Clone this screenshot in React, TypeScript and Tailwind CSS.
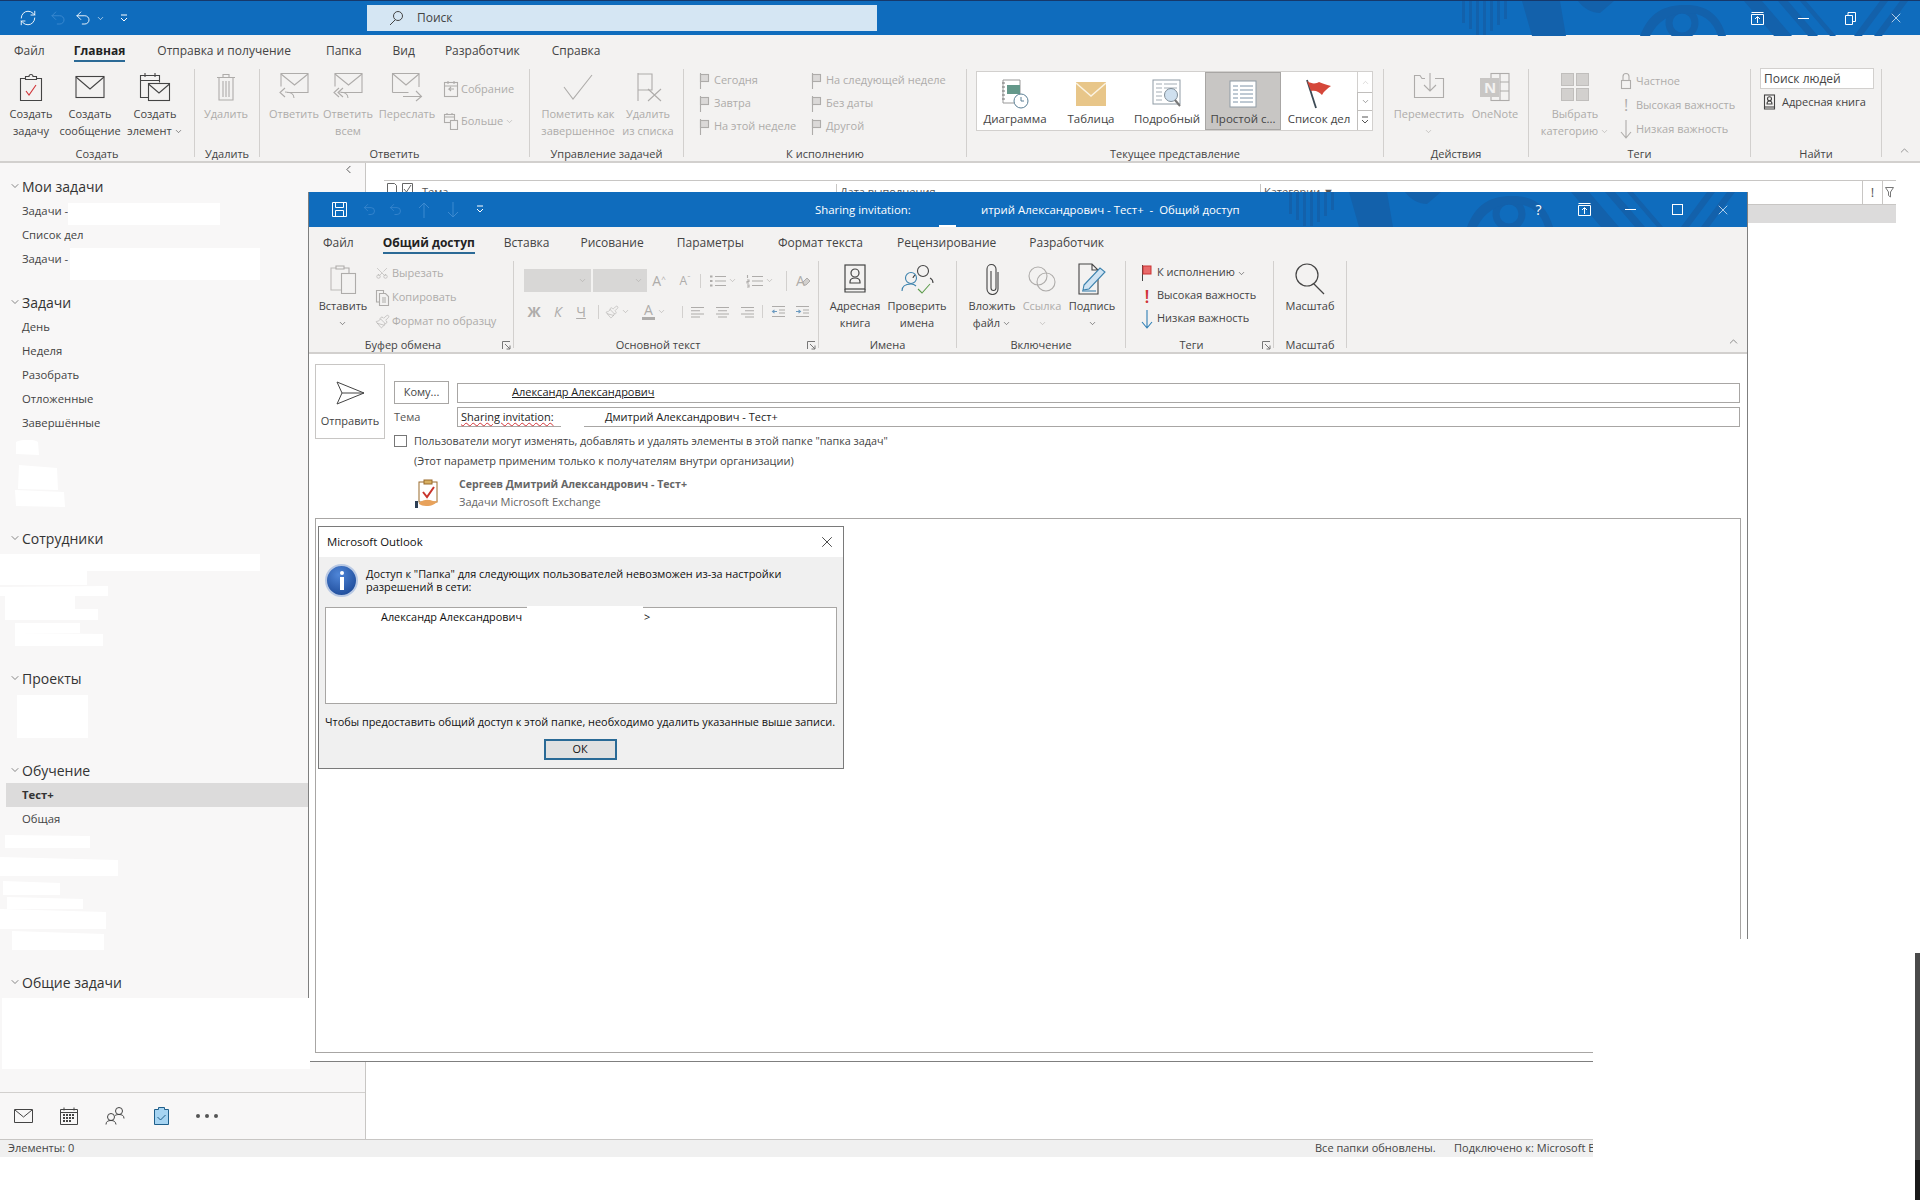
import type { ReactNode } from "react";
import { ChevronDown, ChevronUp, ChevronLeft, Paintbrush, RefreshCw, Scissors, Undo2, Redo2, X } from "lucide-react";

const Svg = ({ w, h, sw = 1.1, children }: { w: number; h: number; sw?: number; children: ReactNode }) => (
  <svg width={w} height={h} viewBox={`0 0 ${w} ${h}`} fill="none" stroke="currentColor" strokeWidth={sw}>
    {children}
  </svg>
);

// small chevron used in ribbon buttons
const Chev = () => <ChevronDown size={9} strokeWidth={1.6} className="inline-block" />;

// ---- ribbon icons
const TaskIcon = () => (
  <Svg w={24} h={28}>
    <path d="M6.500 5.500h-5v22h21v-22h-5" />
    <path d="M6.500 6.500V3.500h3.500a2 2 0 0 1 4 0h3.500v3z" />
    <path d="M7 18l3 4 7-10" stroke="#d13438" />
  </Svg>
);
const MailIcon = () => (
  <Svg w={30} h={24}>
    <rect x="1" y="1.500" width="28" height="21" />
    <path d="M1 2l14 12L29 2" />
  </Svg>
);
const ItemIcon = () => (
  <Svg w={32} h={30}>
    <path d="M11 25.500H1.500V3.500h19v7" />
    <path d="M1.500 8.500h19M6 1v4M16 1v4" />
    <rect x="9.500" y="11.500" width="21" height="17" fill="#f3f2f1" />
    <path d="M9.500 12l10.500 9 10.500-9" />
  </Svg>
);
const TrashIcon = () => (
  <Svg w={20} h={28}>
    <path d="M1 4.500h18M7 4V1.500h6V4M3 5v22h14V5M7 8v16M10 8v16M13 8v16" />
  </Svg>
);
const MailBack = ({ all }: { all?: boolean }) => (
  <Svg w={32} h={30}>
    <path d="M9 20.500h21V1.500H3v13" />
    <path d="M3 2l13.500 11L30 2" />
    <path d="M16 26c0-4-4-6-9-6M7 16l-5 4.500L7 25" />
    {all && <path d="M11 16l-5 4.500 5 4.500" />}
  </Svg>
);
const MailForward = () => (
  <Svg w={32} h={30}>
    <path d="M1.500 20.500h16M28 15V1.500H1.500v19" />
    <path d="M2 2l13 11L28 2" />
    <path d="M12 24.500h18M25 19l5.500 5.500L25 29" />
  </Svg>
);
const MeetingIcon = () => (
  <Svg w={16} h={18}>
    <rect x="1.500" y="2.500" width="13" height="14" />
    <path d="M1.500 6h13M5 1v3M11 1v3M11 9H6l2-2M6 9l2 2" />
  </Svg>
);
const MoreIcon = () => (
  <Svg w={16} h={18}>
    <rect x="1.500" y="2.500" width="10" height="8" />
    <path d="M4 1v2M9 1v2M1.500 5h10" />
    <rect x="7.500" y="8.500" width="7" height="9" fill="#f3f2f1" />
  </Svg>
);
const CheckBig = () => (
  <Svg w={32} h={28}>
    <path d="M2 14l9 12L30 2" />
  </Svg>
);
const FlagX = () => (
  <Svg w={30} h={30}>
    <path d="M5 1v28M5 2h14v16H5" />
    <path d="M15 17l13 12M28 17L15 29" />
  </Svg>
);
const FlagSmall = () => (
  <Svg w={11} h={18}>
    <path d="M1.500 1v16" />
    <rect x="1.500" y="2.500" width="8" height="7" fill="currentColor" fillOpacity="0.35" />
  </Svg>
);
const MoveIcon = () => (
  <Svg w={32} h={30}>
    <path d="M12 6.500H9l-2-3H1.500v22h29v-19H22" />
    <path d="M17 1v18M11 13l6 6 6-6" />
  </Svg>
);
const OneNoteIcon = () => (
  <Svg w={32} h={30}>
    <rect x="12" y="1.500" width="18" height="27" />
    <path d="M21 1.500v27M21 10h9M21 19h9" />
    <rect x="1" y="6" width="19" height="19" fill="#c8c6c4" stroke="none" />
    <text x="5" y="21" fontSize="15" fontWeight="700" fill="#f3f2f1" stroke="none">N</text>
  </Svg>
);
const CategoryIcon = () => (
  <div className="grid grid-cols-2 gap-[2px]">
    <div className="w-[13px] h-[13px] bg-[#d2d0ce] border border-[#c0bebc]" />
    <div className="w-[13px] h-[13px] bg-[#d2d0ce] border border-[#c0bebc]" />
    <div className="w-[13px] h-[13px] bg-[#d2d0ce] border border-[#c0bebc]" />
    <div className="w-[13px] h-[13px] bg-[#d2d0ce] border border-[#c0bebc]" />
  </div>
);
const LockIcon = () => (
  <Svg w={12} h={18}>
    <rect x="1.500" y="8.500" width="9" height="8" />
    <path d="M3 8V4.500a3 3 0 0 1 6 0V8" />
  </Svg>
);
const ArrowDownThin = () => (
  <Svg w={12} h={20}>
    <path d="M6 1v18M1 13l5 6 5-6" />
  </Svg>
);
const BookIcon = ({ big }: { big?: boolean }) =>
  big ? (
    <Svg w={24} h={30} sw={1.2}>
      <rect x="2" y="1" width="20" height="24" />
      <path d="M2 25v3h20v-3M7 19v-1c0-3 2-4 5-4s5 1 5 4v1z" />
      <circle cx="12" cy="9" r="4" />
    </Svg>
  ) : (
    <Svg w={13} h={16}>
      <rect x="1.500" y="1" width="10" height="12" />
      <path d="M1.500 13v2h10v-2M4 10c0-2 1-3 2.500-3S9 8 9 10z" />
      <circle cx="6.500" cy="4.800" r="2" />
    </Svg>
  );

// ---- gallery icons
const DiagramIcon = () => (
  <svg width="30" height="30" viewBox="0 0 30 30" fill="none">
    <path d="M3 1h17v23H3z" fill="#fff" stroke="#999" />
    <path d="M2 4h3M2 8h3M2 12h3M2 16h3M2 20h3" stroke="#777" />
    <rect x="7" y="6" width="13" height="9" fill="#64988a" />
    <circle cx="21" cy="22" r="7" fill="#fff" stroke="#5b7f95" />
    <path d="M21 18v4h3" stroke="#5b7f95" />
  </svg>
);
const TableMailIcon = () => (
  <svg width="30" height="24" viewBox="0 0 30 24">
    <rect width="30" height="24" fill="#e8c689" />
    <path d="M0 1l15 13L30 1" fill="none" stroke="#fbf3e2" strokeWidth="1.500" />
  </svg>
);
const DetailIcon = () => (
  <svg width="30" height="30" viewBox="0 0 30 30" fill="none">
    <rect x="1" y="1" width="27" height="24" fill="#fff" stroke="#8f9ba5" />
    <path d="M4 5h6M12 5h13M4 9h6M12 9h13M4 13h6M4 17h6M4 21h6" stroke="#a4adb5" />
    <circle cx="19" cy="16" r="6.500" fill="#cfe0ef" stroke="#7f8c96" />
    <path d="M23 21l5 6" stroke="#777" strokeWidth="2" />
  </svg>
);
const SimpleListIcon = () => (
  <svg width="28" height="28" viewBox="0 0 28 28" fill="none">
    <rect x="1" y="1" width="26" height="26" fill="#fff" stroke="#8f9ba5" />
    <path d="M4 6h5M11 6h13M4 10h5M11 10h13M4 14h5M11 14h13M4 18h5M11 18h13M4 22h5M11 22h13" stroke="#7f94a8" />
  </svg>
);
const RedFlag = () => (
  <svg width="30" height="30" viewBox="0 0 30 30" fill="none">
    <path d="M3 1l9 28" stroke="#3c4a55" strokeWidth="1.800" />
    <path d="M3 2c6 4 10 2 12 1 3 1 7 3 12 4-4 3-7 5-9 9-3-3-6-5-11-4z" fill="#d5473a" />
  </svg>
);

// ---- compose icons
const PasteIcon = () => (
  <Svg w={28} h={30}>
    <path d="M7 4H2v22h10" stroke="#bdbbb9" />
    <path d="M7 5V2h8v3z" />
    <path d="M15 4h5v5" />
    <rect x="12.500" y="9.500" width="14" height="20" fill="#f3f2f1" />
  </Svg>
);
const CopyIcon = () => (
  <Svg w={15} h={17}>
    <path d="M4 13H1.500V1.500h7V4" />
    <path d="M4.500 4.500h6l3 3v9h-9z" fill="#f3f2f1" />
    <path d="M7 9h4M7 11h4M7 13h4" />
  </Svg>
);
const ListIcon = ({ num }: { num?: boolean }) => (
  <Svg w={17} h={14}>
    <path d="M6 2.500h11M6 7h11M6 11.500h11" />
    {num ? <path d="M1.500 1v3M1 6h2v1.500H1V9h2M1 11h2v2H1" /> : <path d="M1 2.500h2.500M1 7h2.500M1 11.500h2.500" strokeWidth="2" />}
  </Svg>
);
const AlignIcon = ({ kind }: { kind: "l" | "c" | "r" }) => (
  <Svg w={15} h={12}>
    <path d="M1 1.500h13M1 8h13" />
    {kind === "l" && <path d="M1 4.800h9M1 11h9" />}
    {kind === "c" && <path d="M3 4.800h9M3 11h9" />}
    {kind === "r" && <path d="M5 4.800h9M5 11h9" />}
  </Svg>
);
const IndentIcon = ({ inc }: { inc?: boolean }) => (
  <Svg w={15} h={13}>
    <path d="M1 1.500h13M8 5h6M8 8h6M1 11.500h13" />
    {inc ? <path d="M1 6.500h4M3.500 4.800L5.500 6.500 3.500 8.200" stroke="#6d9bc0" /> : <path d="M6 6.500H2M3.500 4.800L1.500 6.500 3.500 8.200" stroke="#6d9bc0" />}
  </Svg>
);
const EraserIcon = () => (
  <svg width="9" height="9" viewBox="0 0 9 9" className="ml-[-3px] mt-[6px]" fill="#d2d0ce" stroke="#aeacaa"><path d="M1 5l4-4 3 3-4 4H2z" /></svg>
);
const CheckNamesIcon = () => (
  <svg width="36" height="30" viewBox="0 0 36 30" fill="none" stroke="#444" strokeWidth="1.100">
    <circle cx="24" cy="7" r="5.500" />
    <path d="M16 11c-1 1-2 2-2 3M31 14c2 1 3 3 3 5" />
    <circle cx="12" cy="14" r="5.500" stroke="#3c82ad" />
    <path d="M3 27c0-5 3-7 9-7 2 0 4 1 5 2" stroke="#3c82ad" />
    <path d="M19 25l4 4 8-9" stroke="#5d9c4c" />
  </svg>
);
const ClipIcon = () => (
  <Svg w={17} h={32}>
    <path d="M7 8v17a2.500 2.500 0 0 0 5 0V6a4.500 4.500 0 0 0-9 0v20a5.500 5.500 0 0 0 11 0V9" />
  </Svg>
);
const LinkIcon = () => (
  <Svg w={30} h={26}>
    <circle cx="11" cy="10" r="9" />
    <circle cx="19" cy="16" r="9" />
  </Svg>
);
const SignIcon = () => (
  <svg width="30" height="32" viewBox="0 0 30 32" fill="none" stroke="#444" strokeWidth="1.100">
    <path d="M2 1h13l6 6v24H2zM15 1v6h6" />
    <path d="M7 22L23 5l5 4-16 17-6 1z" stroke="#3c82ad" fill="#cfe3f2" />
    <path d="M5 28h14" stroke="#3c82ad" />
  </svg>
);
const ZoomIcon = () => (
  <Svg w={32} h={32} sw={1.2}>
    <circle cx="13" cy="12" r="11" />
    <path d="M20 21l10 10" />
  </Svg>
);
const SaveIcon = () => (
  <svg width="17" height="17" viewBox="0 0 17 17" fill="none" stroke="#fff" strokeWidth="1">
    <path d="M1.500 1.500h14v14h-14zM4.500 1.500v5h8v-5M4.500 15.500v-6h8v6" />
  </svg>
);
const DisplayIcon = () => (
  <svg width="13" height="13" viewBox="0 0 13 13" fill="none" stroke="#fff" strokeWidth="1">
    <path d="M.5 2.500h12v10H.5zM.5.500h12M6.500 11V5M4 7l2.500-2.500L9 7" />
  </svg>
);

// ---- title bar background pattern, same in both windows
const TitleDecor = () => (
  <svg width="460" height="35" viewBox="0 0 460 35" className="absolute right-0 top-0" fill="#1361ab">
    <path d="M2 0h3v22H2zM9 0h3v28H9zM16 0h3v34H16zM23 0h3v34H23zM30 0h3v30H30zM37 0h3v24H37zM44 0h3v18H44z" />
    <path d="M62 0h38l6 35H72z" />
    <path d="M118 0h36l-14 12c-8 0-16-4-22-12z" />
    <circle cx="222" cy="22" r="13" fill="none" stroke="#1361ab" strokeWidth="7" />
    <path d="M180 35C190 10 205 4 226 4s34 10 40 31h-8c-5-16-16-23-32-23s-28 8-36 23z" />
    <path d="M284 0h18l30 35h-18zM318 0h10l30 35h-10zM340 0h6l30 35h-6z" />
    <path d="M420 0h8l-26 35h-8zM440 0h8l-26 35h-8z" />
  </svg>
);

// ---- ribbon building blocks
const Group = ({ w, label, launcher, compact, children }: { w: number; label: string; launcher?: boolean; compact?: boolean; children: ReactNode }) => (
  <div
    style={{ width: w }}
    className={`flex flex-col shrink-0 border-r border-[#d2d0ce] ${compact ? "h-[87px]" : "h-[88px]"}`}
  >
    <div className="flex flex-1 min-h-0">{children}</div>
    <div className={`relative h-[12px] mb-[-3px] leading-[12px] text-center text-[#444] whitespace-nowrap ${launcher ? "pr-[16px]" : ""}`}>
      {label}
      {launcher && (
        <svg width="9" height="9" viewBox="0 0 9 9" className="absolute right-[2px] top-[2px]" fill="none" stroke="#777" strokeWidth="1">
          <path d="M.5 8V.5H8M3 3l5 5M8 4.500V8H4.500" />
        </svg>
      )}
    </div>
  </div>
);

const BigBtn = ({ w, lines, icon, off, chev, chevLine }: { w: number; lines: string[]; icon: ReactNode; off?: boolean; chev?: boolean; chevLine?: boolean }) => (
  <div
    style={{ width: w }}
    className={`flex flex-col items-center shrink-0 pt-[4px] ${off ? "text-[#aeacaa]" : "text-[#444]"}`}
  >
    <div className="h-[28px] flex items-center justify-center">{icon}</div>
    <div className="mt-[5px] leading-[16.500px] text-center whitespace-nowrap">
      {lines.map((l, i) => (
        <div key={i}>
          {l}
          {chev && i === lines.length - 1 && (
            <span className="ml-[2px]">
              <Chev />
            </span>
          )}
        </div>
      ))}
      {chevLine && <div className="h-[17px] flex items-center justify-center"><Chev /></div>}
    </div>
  </div>
);

const SmallRow = ({ icon, text, off, h = 23, chev }: { icon: ReactNode; text: string; off?: boolean; h?: number; chev?: boolean }) => (
  <div style={{ height: h }} className={`flex items-center whitespace-nowrap ${off ? "text-[#aeacaa]" : "text-[#444]"}`}>
    <div className="w-[18px] flex justify-center shrink-0">{icon}</div>
    <span className="ml-[1px]">{text}</span>
    {chev && <span className="ml-[2px]"><Chev /></span>}
  </div>
);

const GalleryItem = ({ icon, label, active }: { icon: ReactNode; label: string; active?: boolean }) => (
  <div className={`w-[76px] shrink-0 flex flex-col items-center text-[#444] text-[11.500px] whitespace-nowrap ${active ? "bg-[#c8c6c4] border border-[#a8a6a4] pt-[5px]" : "pt-[6px]"}`}>
    <div className="h-[32px] flex items-center justify-center">{icon}</div>
    <div className="leading-[16px] mt-[1px]">{label}</div>
  </div>
);

const Tab = ({ label, ml, active }: { label: string; ml: number; active?: boolean }) => (
  <div style={{ marginLeft: ml }} className={`relative shrink-0 whitespace-nowrap leading-[18px] text-[12px] ${active ? "font-bold text-[#222]" : "text-[#444]"}`}>
    {label}
    {active && <div className="absolute left-0 right-0 top-[18px] h-[2px] bg-[#2b6a96]" />}
  </div>
);

// ---- sidebar
const Header = ({ label, mt = 0 }: { label: string; mt?: number }) => (
  <div style={{ marginTop: mt }} className="h-[24px] flex items-center pl-[9px] pb-[2px] text-[14px] text-[#333]">
    <ChevronDown size={12} strokeWidth={1.4} className="text-[#555]" />
    <span className="ml-[1px]">{label}</span>
  </div>
);
const Item = ({ label }: { label: string }) => <div className="h-[24px] flex items-center pl-[22px] text-[11.300px] text-[#444]">{label}</div>;

const WinButtons = ({ restore, help }: { restore?: boolean; help?: boolean }) => (
  <div className="relative flex items-center text-white">
    {help && <span className="w-[45px] text-center text-[14px]">?</span>}
    <div className="w-[46px] flex justify-center"><DisplayIcon /></div>
    <div className="w-[47px] flex justify-center">
      <div className="w-[11px] h-px bg-white" />
    </div>
    <div className="w-[46px] flex justify-center">
      {restore ? (
        <svg width="11" height="13" viewBox="0 0 11 13" fill="none" stroke="#fff"><path d="M.5 3.500h7v9h-7zM3 3V.5h7.500v9H8" /></svg>
      ) : (
        <div className="w-[11px] h-[11px] border border-white" />
      )}
    </div>
    <div className="w-[46px] flex justify-center"><X size={16} strokeWidth={1} /></div>
  </div>
);

const Scribble = () => (
  <svg width="270" height="520" viewBox="0 0 270 520" className="absolute left-0 top-[440px]" fill="#fff">
    {/* redaction strokes over the folder list */}
    <path d="M16 2c6-3 18-3 22 0l1 13-23-1zM19 25l38 3 1 22-40-1zM15 50l49 2 1 15-49-1z" />
    <path d="M0 114h260v17H0zM0 131h87v14H0zM0 147l108-1v10H0zM5 156h70v13H5zM5 169h93v11H5zM15 183h65v10H15zM15 193l88 1v12H15z" />
    <path d="M5 395l85 1v12H5zM0 417l118 3v16H0zM3 441l57 2v12H3zM7 457l76 2v10H7zM0 469l106 3v17H0zM12 491l92 3v16H12z" />
  </svg>
);

export default function App() {
  return (
    <div className="relative w-[1920px] h-[1200px] overflow-hidden bg-white text-[11px] font-['Open_Sans','Noto_Sans',sans-serif]">
      {/* main Outlook window */}
      <div className="flex flex-col h-[1157px]">
        <div className="relative h-[35px] shrink-0 bg-[#0f6cbd] border-t border-[#16386b] flex items-center text-white">
          <TitleDecor />
          <div className="relative flex items-center pl-[19px] w-[367px]">
            <RefreshCw size={18} strokeWidth={1.2} />
            <Undo2 size={18} strokeWidth={1.2} className="ml-[12px] text-[#3d8ad0]" />
            <Redo2 size={18} strokeWidth={1.2} className="ml-[7px] -scale-x-100" />
            <ChevronDown size={9} strokeWidth={1.6} className="ml-[4px]" />
            <svg width="8" height="9" viewBox="0 0 8 9" className="ml-[15px]" fill="none" stroke="#fff"><path d="M1 1h6M1 4l3 3 3-3" /></svg>
          </div>
          <div className="relative w-[510px] h-[26px] bg-[#d5e6f3] flex items-center text-[#444] text-[12px]">
            <svg width="16" height="16" viewBox="0 0 16 16" className="ml-[21px]" fill="none" stroke="#444"><circle cx="10" cy="6" r="4.500" /><path d="M7 10l-5 5" /></svg>
            <span className="ml-[13px]">Поиск</span>
          </div>
          <div className="relative ml-auto pr-[1px]">
            <WinButtons restore />
          </div>
        </div>

        <div className="shrink-0 h-[128px] bg-[#f3f2f1] border-b-2 border-[#d2d0ce] flex flex-col">
          <div className="h-[31px] flex items-center shrink-0">
            <Tab label="Файл" ml={14} />
            <Tab label="Главная" ml={29} active />
            <Tab label="Отправка и получение" ml={32} />
            <Tab label="Папка" ml={35} />
            <Tab label="Вид" ml={31} />
            <Tab label="Разработчик" ml={30} />
            <Tab label="Справка" ml={32} />
          </div>
          <div className="flex mt-[3px]">
            <Group w={195} label="Создать">
              <div className="w-[5px]" />
              <BigBtn w={52} lines={["Создать", "задачу"]} icon={<TaskIcon />} />
              <BigBtn w={66} lines={["Создать", "сообщение"]} icon={<MailIcon />} />
              <BigBtn w={64} lines={["Создать", "элемент"]} chev icon={<ItemIcon />} />
            </Group>
            <Group w={65} label="Удалить">
              <BigBtn w={62} off lines={["Удалить"]} icon={<TrashIcon />} />
            </Group>
            <Group w={270} label="Ответить">
              <div className="w-[8px]" />
              <BigBtn w={52} off lines={["Ответить"]} icon={<MailBack />} />
              <BigBtn w={56} off lines={["Ответить", "всем"]} icon={<MailBack all />} />
              <BigBtn w={62} off lines={["Переслать"]} icon={<MailForward />} />
              <div className="pl-[4px] pt-[8px] text-[#aeacaa]">
                <div className="mb-[8px]"><SmallRow off h={24} icon={<MeetingIcon />} text="Собрание" /></div>
                <SmallRow off h={24} chev icon={<MoreIcon />} text="Больше" />
              </div>
            </Group>
            <Group w={154} label="Управление задачей">
              <div className="w-[4px]" />
              <BigBtn w={88} off lines={["Пометить как", "завершенное"]} icon={<CheckBig />} />
              <BigBtn w={52} off lines={["Удалить", "из списка"]} icon={<FlagX />} />
            </Group>
            <Group w={283} label="К исполнению">
              <div className="w-[11px]" />
              <div className="w-[112px]">
                <SmallRow off icon={<FlagSmall />} text="Сегодня" />
                <SmallRow off icon={<FlagSmall />} text="Завтра" />
                <SmallRow off icon={<FlagSmall />} text="На этой неделе" />
              </div>
              <div>
                <SmallRow off icon={<FlagSmall />} text="На следующей неделе" />
                <SmallRow off icon={<FlagSmall />} text="Без даты" />
                <SmallRow off icon={<FlagSmall />} text="Другой" />
              </div>
            </Group>
            <Group w={417} label="Текущее представление">
              <div className="ml-[9px] mt-[2px] w-[397px] h-[60px] bg-white border border-[#d2d0ce] flex">
                <GalleryItem icon={<DiagramIcon />} label="Диаграмма" />
                <GalleryItem icon={<TableMailIcon />} label="Таблица" />
                <GalleryItem icon={<DetailIcon />} label="Подробный" />
                <GalleryItem active icon={<SimpleListIcon />} label="Простой с..." />
                <GalleryItem icon={<RedFlag />} label="Список дел" />
                <div className="ml-auto w-[15px] flex flex-col text-[#666] bg-[#f3f2f1]">
                  <div className="h-[20px] bg-white border-l border-[#d2d0ce] flex items-center justify-center text-[#c8c6c4]"><ChevronUp size={9} strokeWidth={1.6} /></div>
                  <div className="h-[19px] border border-[#c0bebc] border-r-0 bg-white flex items-center justify-center"><ChevronDown size={9} strokeWidth={1.6} /></div>
                  <div className="flex-1 border-l border-[#c0bebc] bg-white flex items-center justify-center">
                    <svg width="8" height="9" viewBox="0 0 8 9" fill="none" stroke="#555"><path d="M1 1h6M1 4l3 3 3-3" /></svg>
                  </div>
                </div>
              </div>
            </Group>
            <Group w={145} label="Действия">
              <div className="w-[8px]" />
              <BigBtn w={74} off lines={["Переместить"]} chevLine icon={<MoveIcon />} />
              <BigBtn w={58} off lines={["OneNote"]} icon={<OneNoteIcon />} />
            </Group>
            <Group w={222} label="Теги">
              <div className="w-[10px]" />
              <BigBtn w={72} off lines={["Выбрать", "категорию"]} chev icon={<CategoryIcon />} />
              <div className="ml-[6px]">
                <SmallRow off h={24} icon={<LockIcon />} text="Частное" />
                <SmallRow off h={24} icon={<span className="text-[16px] leading-none">!</span>} text="Высокая важность" />
                <SmallRow off h={24} icon={<ArrowDownThin />} text="Низкая важность" />
              </div>
            </Group>
            <Group w={131} label="Найти">
              <div className="pl-[9px] text-[#444]">
                <div className="mt-[-1px] w-[114px] h-[21px] bg-white border border-[#d2d0ce] flex items-center pl-[3px] text-[12px]">Поиск людей</div>
                <div className="mt-[1px] h-[24px] flex items-center pl-[3px]">
                  <BookIcon />
                  <span className="ml-[6px] whitespace-nowrap">Адресная книга</span>
                </div>
              </div>
            </Group>
            <div className="flex-1 flex items-end justify-end pr-[9px] text-[#666]">
              <ChevronUp size={13} strokeWidth={1.2} />
            </div>
          </div>
        </div>

        <div className="flex flex-1 min-h-0">
          <div className="w-[366px] shrink-0 bg-[#f8f7f7] border-r border-[#c8c6c4] flex flex-col">
            <div className="h-[12px] flex justify-end pr-[10px] text-[#444]">
              <ChevronLeft size={13} strokeWidth={1.6} className="shrink-0" />
            </div>
            <Header label="Мои задачи" />
            <Item label="Задачи -" />
            <Item label="Список дел" />
            <Item label="Задачи -" />
            <Header label="Задачи" mt={20} />
            <Item label="День" />
            <Item label="Неделя" />
            <Item label="Разобрать" />
            <Item label="Отложенные" />
            <Item label="Завершённые" />
            <Header label="Сотрудники" mt={92} />
            <Header label="Проекты" mt={116} />
            <Header label="Обучение" mt={68} />
            <div className="h-[24px] ml-[6px] pl-[16px] flex items-center bg-[#dcdbdb] font-bold text-[11.300px] text-[#333]">Тест+</div>
            <Item label="Общая" />
            <Header label="Общие задачи" mt={140} />
            <div className="mt-auto h-[47px] border-t border-[#d2d0ce] flex items-center text-[#444]">
              <div className="w-[46px] flex justify-center">
                <svg width="19" height="14" viewBox="0 0 19 14" fill="none" stroke="#444" strokeWidth="1"><path d="M.5.5h18v13H.5zM1 1l8.500 7L18 1" /></svg>
              </div>
              <div className="w-[46px] flex justify-center">
                <svg width="18" height="18" viewBox="0 0 18 18" fill="none" stroke="#444" strokeWidth="1"><path d="M.5 2.500h17v15H.5zM.5 5.500h17M4 .5v3M14 .5v3" /><path d="M3 8h12M3 11h12M3 14h9" strokeWidth="2" strokeDasharray="2 1" /></svg>
              </div>
              <div className="w-[46px] flex justify-center">
                <svg width="20" height="18" viewBox="0 0 20 18" fill="none" stroke="#444" strokeWidth="1"><circle cx="6" cy="10" r="3.500" /><path d="M1 17.500c0-3 2-4 5-4s4.500 1 5 4" /><circle cx="14" cy="4" r="3.500" /><path d="M10 8.500c1-.5 2-1 4-1 3 0 5 1 5 4" /></svg>
              </div>
              <div className="w-[46px] flex justify-center">
                <svg width="15" height="18" viewBox="0 0 15 18"><path d="M.5 2.500h4V.5h6v2h4v15H.5z" fill="#a6d4f2" stroke="#1f5f8b" /><path d="M3.500 10l3 3 5-5" fill="none" stroke="#1f5f8b" /></svg>
              </div>
              <div className="w-[46px] flex justify-center gap-[5px]">
                <div className="w-[4px] h-[4px] rounded-full bg-[#555]" />
                <div className="w-[4px] h-[4px] rounded-full bg-[#555]" />
                <div className="w-[4px] h-[4px] rounded-full bg-[#555]" />
              </div>
            </div>
          </div>
          <div className="flex-1 min-w-0 bg-white">
            <div className="mt-[17px] ml-[18px] w-[1512px] h-[25px] border-y border-[#c8c6c4] flex items-center text-[#555]">
              <svg width="30" height="12" viewBox="0 0 30 12" className="ml-[2px] mr-[6px] self-start mt-[2px] shrink-0" fill="none" stroke="#666"><path d="M1.500.5h7l2 2v9h-9zM16.500.5h10v11h-10zM18 6l2.500 3L25 2" /></svg>
              <div className="w-[414px]">Тема</div>
              <div className="w-[424px] border-l border-[#c8c6c4] pl-[3px]">Дата выполнения</div>
              <div className="flex-1 border-l border-[#c8c6c4] pl-[3px]">Категории ▼</div>
              <div className="w-[20px] h-full border-l border-[#c8c6c4] flex items-center justify-center text-[13px]">!</div>
              <div className="w-[14px] h-full border-l border-[#c8c6c4] flex items-center justify-center">
                <svg width="9" height="11" viewBox="0 0 9 11" fill="none" stroke="#777"><path d="M.5.5h8L5.500 5v5l-2-1.500V5z" /></svg>
              </div>
            </div>
            <div className="ml-[18px] w-[1512px] h-[18px] bg-[#dcdbdb]" />
          </div>
        </div>

        <div className="h-[18px] shrink-0 bg-[#f0f0f0] border-t border-[#c8c6c4] flex items-center pl-[8px] text-[#444] whitespace-nowrap">
          <span className="w-[1307px]">Элементы: 0</span>
          <span className="w-[139px]">Все папки обновлены.</span>
          <span>Подключено к: Microsoft Exchange</span>
        </div>
      </div>

      {/* redactions over the folder list */}
      <div className="absolute left-[68px] top-[203px] w-[152px] h-[22px] bg-white" />
      <div className="absolute left-[70px] top-[248px] w-[190px] h-[32px] bg-white" />
      <div className="absolute left-[17px] top-[695px] w-[71px] h-[43px] bg-white" />
      <Scribble />

      {/* sharing invitation window */}
      <div className="absolute left-[308px] top-[192px] w-[1440px] h-[870px] flex flex-col bg-white border border-t-0 border-[#7f7f7f]">
        <div className="relative h-[35px] shrink-0 bg-[#0f6cbd] flex items-center text-white text-[11.400px] whitespace-nowrap">
          <TitleDecor />
          <div className="relative flex items-center pl-[22px] w-[506px]">
            <SaveIcon />
            <Undo2 size={15} strokeWidth={1.2} className="ml-[14px] text-[#3d8ad0]" />
            <Redo2 size={15} strokeWidth={1.2} className="ml-[11px] text-[#3d8ad0] -scale-x-100" />
            <svg width="12" height="16" viewBox="0 0 12 16" className="ml-[15px]" fill="none" stroke="#3d8ad0"><path d="M6 16V1M1 6l5-5 5 5" /></svg>
            <svg width="12" height="16" viewBox="0 0 12 16" className="ml-[17px]" fill="none" stroke="#3d8ad0"><path d="M6 0v15M1 10l5 5 5-5" /></svg>
            <svg width="8" height="9" viewBox="0 0 8 9" className="ml-[17px]" fill="none" stroke="#fff"><path d="M1 1h6M1 4l3 3 3-3" /></svg>
          </div>
          <span className="relative w-[166px]">Sharing invitation:</span>
          <span className="relative">итрий Александрович - Тест+&nbsp; -&nbsp; Общий доступ</span>
          <div className="relative ml-auto pr-[1px]">
            <WinButtons help />
          </div>
          <div className="absolute left-[630px] bottom-0 w-[17px] h-[2px] bg-white" />
        </div>

        <div className="shrink-0 h-[127px] bg-[#f3f2f1] border-b-2 border-[#d2d0ce] flex flex-col">
          <div className="h-[32px] mb-[2px] flex items-center shrink-0">
            <Tab label="Файл" ml={14} />
            <Tab label="Общий доступ" ml={29} active />
            <Tab label="Вставка" ml={29} />
            <Tab label="Рисование" ml={31} />
            <Tab label="Параметры" ml={33} />
            <Tab label="Формат текста" ml={34} />
            <Tab label="Рецензирование" ml={34} />
            <Tab label="Разработчик" ml={33} />
          </div>
          <div className="flex">
            <Group compact w={205} label="Буфер обмена" launcher>
              <BigBtn w={68} lines={["Вставить"]} chevLine icon={<span className="text-[#aeacaa]"><PasteIcon /></span>} />
              <div className="ml-[-4px]">
                <SmallRow off h={24} icon={<Scissors size={14} strokeWidth={1} className="-rotate-90" />} text="Вырезать" />
                <SmallRow off h={24} icon={<CopyIcon />} text="Копировать" />
                <SmallRow off h={24} icon={<Paintbrush size={15} strokeWidth={1} />} text="Формат по образцу" />
              </div>
            </Group>
            <Group compact w={305} label="Основной текст" launcher>
              <div className="pl-[10px] pt-[8px] text-[#aeacaa]">
                <div className="flex items-center h-[23px]">
                  <div className="w-[67px] h-[23px] bg-[#d8d7d6] flex items-center justify-end pr-[4px]"><Chev /></div>
                  <div className="ml-[2px] w-[54px] h-[23px] bg-[#d8d7d6] flex items-center justify-end pr-[4px]"><Chev /></div>
                  <span className="ml-[2px] w-[20px] text-center text-[14px]">A<sup className="text-[8px]">^</sup></span>
                  <span className="ml-[6px] w-[20px] text-center text-[12px]">A<sup className="text-[8px]">ˇ</sup></span>
                  <div className="ml-[5px] w-[46px] flex items-center border-l border-[#d2d0ce] pl-[8px] gap-[2px]"><ListIcon /><Chev /></div>
                  <div className="w-[40px] flex items-center gap-[2px]"><ListIcon num /><Chev /></div>
                  <div className="flex border-l border-[#d2d0ce] pl-[9px] text-[14px] leading-[20px]">A<EraserIcon /></div>
                </div>
                <div className="flex items-center h-[23px] mt-[8px] whitespace-nowrap">
                  <span className="w-[20px] text-center font-bold text-[14px]">Ж</span>
                  <span className="w-[24px] ml-[2px] text-center italic text-[14px]">К</span>
                  <span className="w-[22px] text-center underline text-[14px]">Ч</span>
                  <div className="w-[36px] ml-[6px] flex items-center border-l border-[#d2d0ce] pl-[6px] gap-[2px]">
                    <Paintbrush size={14} strokeWidth={1} />
                    <Chev />
                  </div>
                  <div className="w-[48px] pl-[8px] flex items-center gap-[2px]"><span className="border-b-[3px] border-[#aeacaa] leading-[14px] text-[14px] px-[2px]">A</span><Chev /></div>
                  <div className="flex items-center gap-[10px] border-l border-[#d2d0ce] pl-[7px]">
                    <AlignIcon kind="l" />
                    <AlignIcon kind="c" />
                    <AlignIcon kind="r" />
                  </div>
                  <div className="flex items-center gap-[9px] ml-[7px] border-l border-[#d2d0ce] pl-[8px]">
                    <IndentIcon />
                    <IndentIcon inc />
                  </div>
                </div>
              </div>
            </Group>
            <Group compact w={138} label="Имена">
              <div className="w-[5px]" />
              <BigBtn w={62} lines={["Адресная", "книга"]} icon={<BookIcon big />} />
              <BigBtn w={62} lines={["Проверить", "имена"]} icon={<CheckNamesIcon />} />
            </Group>
            <Group compact w={169} label="Включение">
              <div className="w-[6px]" />
              <BigBtn w={58} lines={["Вложить", "файл"]} chev icon={<ClipIcon />} />
              <BigBtn w={42} off lines={["Ссылка"]} chevLine icon={<LinkIcon />} />
              <BigBtn w={58} lines={["Подпись"]} chevLine icon={<SignIcon />} />
            </Group>
            <Group compact w={148} label="Теги" launcher>
              <div className="pl-[12px]">
                <SmallRow icon={<svg width="12" height="18" viewBox="0 0 12 18"><path d="M1.500 1v16" stroke="#444" /><rect x="2" y="2" width="8" height="8" fill="#e86a6a" stroke="#c33" /></svg>} text="К исполнению" chev />
                <SmallRow icon={<span className="text-[#d13438] text-[18px] font-semibold leading-none">!</span>} text="Высокая важность" />
                <SmallRow icon={<span className="text-[#2e7fb5]"><ArrowDownThin /></span>} text="Низкая важность" />
              </div>
            </Group>
            <Group compact w={73} label="Масштаб">
              <BigBtn w={72} lines={["Масштаб"]} icon={<ZoomIcon />} />
            </Group>
            <div className="flex-1 flex items-end justify-end pr-[7px] text-[#555]">
              <ChevronUp size={13} strokeWidth={1.2} />
            </div>
          </div>
        </div>

        <div className="flex-1 min-h-0 flex flex-col px-[6px] pt-[10px] pb-[8px]">
          <div className="flex h-[154px] shrink-0 text-[#444]">
            <div className="w-[70px] h-[75px] shrink-0 border border-[#c8c6c4] flex flex-col items-center">
              <svg width="30" height="24" viewBox="0 0 30 24" className="mt-[16px]" fill="none" stroke="#444" strokeWidth="1"><path d="M2 1l27 11L2 23l5-11zM7 12h22" /></svg>
              <span className="mt-[8px]">Отправить</span>
            </div>
            <div className="flex-1 min-w-0 ml-[9px] pt-[17px]">
              <div className="flex items-center h-[23px] mr-[1px]">
                <div className="w-[55px] h-[23px] shrink-0 border border-[#a8a6a4] flex items-center justify-center">Кому...</div>
                <div className="flex-1 ml-[8px] h-[20px] border border-[#a8a6a4] pl-[54px] leading-[16px] text-[#222] underline">Александр Александрович</div>
              </div>
              <div className="flex items-center h-[20px] mt-[3px] mr-[1px]">
                <div className="w-[63px] shrink-0 text-[#555]">Тема</div>
                <div className="relative flex-1 h-[20px] border border-[#a8a6a4] pl-[3px] leading-[18px] text-[#222] whitespace-nowrap">
                  <span className="inline-block w-[144px] underline decoration-wavy decoration-[#d13438] decoration-1">Sharing invitation:</span>
                  <span>Дмитрий Александрович - Тест+</span>
                  <div className="absolute left-[103px] bottom-[-1px] top-[-1px] w-[23px] bg-white border-t border-[#a8a6a4]" />
                </div>
              </div>
              <div className="flex items-center h-[12px] mt-[8px] whitespace-nowrap">
                <div className="w-[13px] h-[12px] border border-[#777] bg-white shrink-0" />
                <span className="ml-[7px] text-[10.800px]">Пользователи могут изменять, добавлять и удалять элементы в этой папке "папка задач"</span>
              </div>
              <div className="mt-[8px] h-[12px] ml-[20px] leading-[12px] whitespace-nowrap">(Этот параметр применим только к получателям внутри организации)</div>
              <div className="flex items-center mt-[9px] ml-[20px]">
                <svg width="26" height="29" viewBox="0 0 26 29" className="shrink-0">
                  <rect x="5" y="3" width="18" height="20" fill="#fff" stroke="#9a6a2a" />
                  <rect x="10" y="1" width="8" height="4" fill="#d8b062" stroke="#9a6a2a" />
                  <path d="M9 13l4 5 7-10" fill="none" stroke="#c9342c" strokeWidth="2" />
                  <path d="M5 24c5-4 9-4 14-2 2 1 4 0 5-1-2 4-6 6-12 6-3 0-5-1-7-2z" fill="#e8a25b" />
                  <rect x="1" y="22" width="3" height="7" fill="#2d3f55" />
                </svg>
                <div className="ml-[19px] leading-[17px] text-[#666]">
                  <div className="font-bold text-[10.600px]">Сергеев Дмитрий Александрович - Тест+</div>
                  <div>Задачи Microsoft Exchange</div>
                </div>
              </div>
            </div>
          </div>
          <div className="flex-1 border border-[#a8a6a4] bg-white" />
        </div>
      </div>

      {/* white area over the lower right part of the capture */}
      <div className="absolute left-[1593px] right-0 top-[939px] bottom-0 bg-white" />
      <div className="absolute right-0 top-[953px] h-[207px] w-[5px] bg-[#4a4a4a]" />
      <div className="absolute right-0 top-[1160px] h-[40px] w-[5px] bg-[#1a1a1a]" />
      <div className="absolute left-[2px] top-[998px] w-[308px] h-[71px] bg-white" />

      {/* message box */}
      <div className="absolute left-[318px] top-[526px] w-[526px] h-[243px] flex flex-col bg-[#f0f0f0] border border-[#7a7a7a] text-[10.900px] text-[#111]">
        <div className="h-[30px] shrink-0 bg-white flex items-center pl-[8px] pr-[7px] text-[11.400px]">
          <span>Microsoft Outlook</span>
          <X size={18} strokeWidth={1} className="ml-auto" />
        </div>
        <div className="flex pl-[6px] pr-[5px] pt-[7px] h-[50px] shrink-0">
          <div className="w-[33px] h-[33px] shrink-0 rounded-full border-2 border-[#b9c9e4] bg-[radial-gradient(circle_at_40%_30%,#4f86d8,#143f8c)] flex flex-col items-center justify-center">
            <div className="w-[4px] h-[4px] rounded-full bg-white" />
            <div className="w-[4px] h-[13px] mt-[2px] bg-white" />
          </div>
          <div className="ml-[8px] leading-[13px] pt-[3px]">
            Доступ к "Папка" для следующих пользователей невозможен из-за настройки
            <br />
            разрешений в сети:
          </div>
        </div>
        <div className="relative mx-[6px] h-[97px] shrink-0 bg-white border border-[#a8a6a4] pl-[55px] pt-[1px] leading-[16px] whitespace-nowrap">
          Александр Александрович
          <span className="absolute left-[318px] top-[1px]">&gt;</span>
          <div className="absolute left-[201px] top-[-2px] w-[116px] h-[16px] bg-white" />
        </div>
        <div className="mt-[10px] pl-[6px] leading-[16px] whitespace-nowrap">Чтобы предоставить общий доступ к этой папке, необходимо удалить указанные выше записи.</div>
        <div className="flex justify-center mt-[9px] pr-[2px]">
          <div className="w-[73px] h-[21px] border-2 border-[#2a6a96] bg-[#e1e1e1] flex items-center justify-center">ОК</div>
        </div>
      </div>
    </div>
  );
}
